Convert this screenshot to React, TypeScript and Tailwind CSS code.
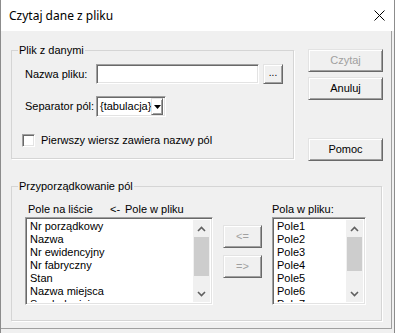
import React from 'react';

const sunken =
  'border border-t-[#a0a0a0] border-l-[#a0a0a0] border-b-white border-r-white shadow-[inset_1px_1px_0_#696969,inset_-1px_-1px_0_#e3e3e3]';
const raised =
  'border border-t-[#e3e3e3] border-l-[#e3e3e3] border-b-[#696969] border-r-[#696969] shadow-[inset_1px_1px_0_#fff,inset_-1px_-1px_0_#a0a0a0]';

function Button({ label, disabled, className = '' }: { label: string; disabled?: boolean; className?: string }) {
  return (
    <div
      className={`flex items-center justify-center bg-[#f0f0f0] ${raised} ${disabled ? 'text-[#a0a0a0]' : 'text-black'} ${className}`}
    >
      {label}
    </div>
  );
}

function GroupBox({ title, className = '', children }: { title: string; className?: string; children: React.ReactNode }) {
  return (
    <div className={`relative border border-[#d5d5d5] shadow-[1px_1px_0_#fff] ${className}`}>
      <span className="absolute -top-[8px] left-[6px] bg-[#f0f0f0] px-[1px] leading-[14px]">{title}</span>
      {children}
    </div>
  );
}

function Chevron({ up }: { up?: boolean }) {
  return (
    <svg width="9" height="6" viewBox="0 0 9 6" className="block">
      <path
        d={up ? 'M1 5 L4.5 1.5 L8 5' : 'M1 1 L4.5 4.5 L8 1'}
        fill="none"
        stroke="#606060"
        strokeWidth="1.6"
      />
    </svg>
  );
}

function ListBox({ items, thumb, className = '' }: { items: string[]; thumb: number; className?: string }) {
  return (
    <div className={`flex h-[88px] overflow-hidden bg-white p-[2px] ${sunken} ${className}`}>
      <div className="flex-1 overflow-hidden pl-[2px]">
        {items.map((it) => (
          <div key={it} className="h-[13px] whitespace-nowrap leading-[13px]">
            {it}
          </div>
        ))}
      </div>
      <div className="flex w-[17px] flex-col bg-[#f0f0f0]">
        <div className="flex h-[17px] items-center justify-center">
          <Chevron up />
        </div>
        <div className="mx-[1px] bg-[#cdcdcd]" style={{ height: thumb }} />
        <div className="flex-1" />
        <div className="flex h-[17px] items-center justify-center">
          <Chevron />
        </div>
      </div>
    </div>
  );
}

const leftItems = ['Nr porządkowy', 'Nazwa', 'Nr ewidencyjny', 'Nr fabryczny', 'Stan', 'Nazwa miejsca', 'Symbol miejsca'];
const rightItems = ['Pole1', 'Pole2', 'Pole3', 'Pole4', 'Pole5', 'Pole6', 'Pole7'];

export default function App() {
  return (
    <div className="flex h-[333px] w-[395px] flex-col border-x border-[#8c8c8c] bg-white font-['Liberation_Sans',Arial,sans-serif] text-[11px] text-black">
      <div className="flex h-[31px] shrink-0 items-center justify-between pl-[8px] pr-[9px]">
        <span className="font-['Noto_Sans',sans-serif] text-[12px]">Czytaj dane z pliku</span>
        <svg width="11" height="11" viewBox="0 0 11 11">
          <path d="M0.5 0.5 L10.5 10.5 M10.5 0.5 L0.5 10.5" stroke="#000" strokeWidth="1" />
        </svg>
      </div>

      <div className="flex-1 bg-[#f0f0f0] pb-[4px] pr-[2px]">
        <div className="h-full border-b border-r border-[#a0a0a0] pl-[10px]">
          <div className="flex items-start">
            <GroupBox title="Plik z danymi" className="mt-[19px] w-[283px] pb-[11px] pl-[10px]">
              <div className="mt-[13px] flex h-[20px] items-center pl-[3px]">
                <span className="w-[71px]">Nazwa pliku:</span>
                <div className={`h-[20px] w-[163px] bg-white ${sunken}`} />
                <Button label="..." className="ml-[4px] h-[20px] w-[20px] pb-[3px] text-[10px]" />
              </div>
              <div className="mt-[12px] flex h-[21px] items-center pl-[3px]">
                <span className="w-[71px]">Separator pól:</span>
                <div className={`flex h-[21px] w-[70px] items-center bg-white p-[2px] ${sunken}`}>
                  <span className="flex-1 pl-[1px] leading-[17px]">{'{tabulacja}'}</span>
                  <div className={`flex h-[17px] w-[16px] items-center justify-center ${raised}`}>
                    <svg width="7" height="4" viewBox="0 0 7 4">
                      <path d="M0 0 H7 L3.5 4 Z" fill="#000" />
                    </svg>
                  </div>
                </div>
              </div>
              <div className="mt-[17px] flex h-[13px] items-center">
                <div className={`h-[13px] w-[13px] bg-white ${sunken}`} />
                <span className="ml-[6px]">Pierwszy wiersz zawiera nazwy pól</span>
              </div>
            </GroupBox>

            <div className="ml-[14px] mt-[18px] flex w-[75px] flex-col">
              <Button label="Czytaj" disabled className="h-[23px]" />
              <Button label="Anuluj" className="mt-[5px] h-[23px]" />
              <Button label="Pomoc" className="mt-[38px] h-[23px]" />
            </div>
          </div>

          <GroupBox title="Przyporządkowanie pól" className="mt-[25px] w-[371px] pb-[15px] pl-[13px]">
            <div className="mt-[16px] flex">
              <div className="flex w-[188px] flex-col">
                <div className="flex h-[13px] items-center leading-[13px]">
                  <span className="ml-[3px] w-[82px]">Pole na liście</span>
                  <span className="w-[15px]">{'<-'}</span>
                  <span>Pole w pliku</span>
                </div>
                <ListBox items={leftItems} thumb={39} className="mt-[1px]" />
              </div>
              <div className="ml-[10px] mt-[22px] flex w-[39px] flex-col">
                <Button label="<=" disabled className="h-[23px]" />
                <Button label="=>" disabled className="mt-[7px] h-[23px]" />
              </div>
              <div className="ml-[10px] flex w-[94px] flex-col">
                <div className="h-[13px] leading-[13px]">Pola w pliku:</div>
                <ListBox items={rightItems} thumb={34} className="mt-[1px]" />
              </div>
            </div>
          </GroupBox>
        </div>
      </div>
    </div>
  );
}
